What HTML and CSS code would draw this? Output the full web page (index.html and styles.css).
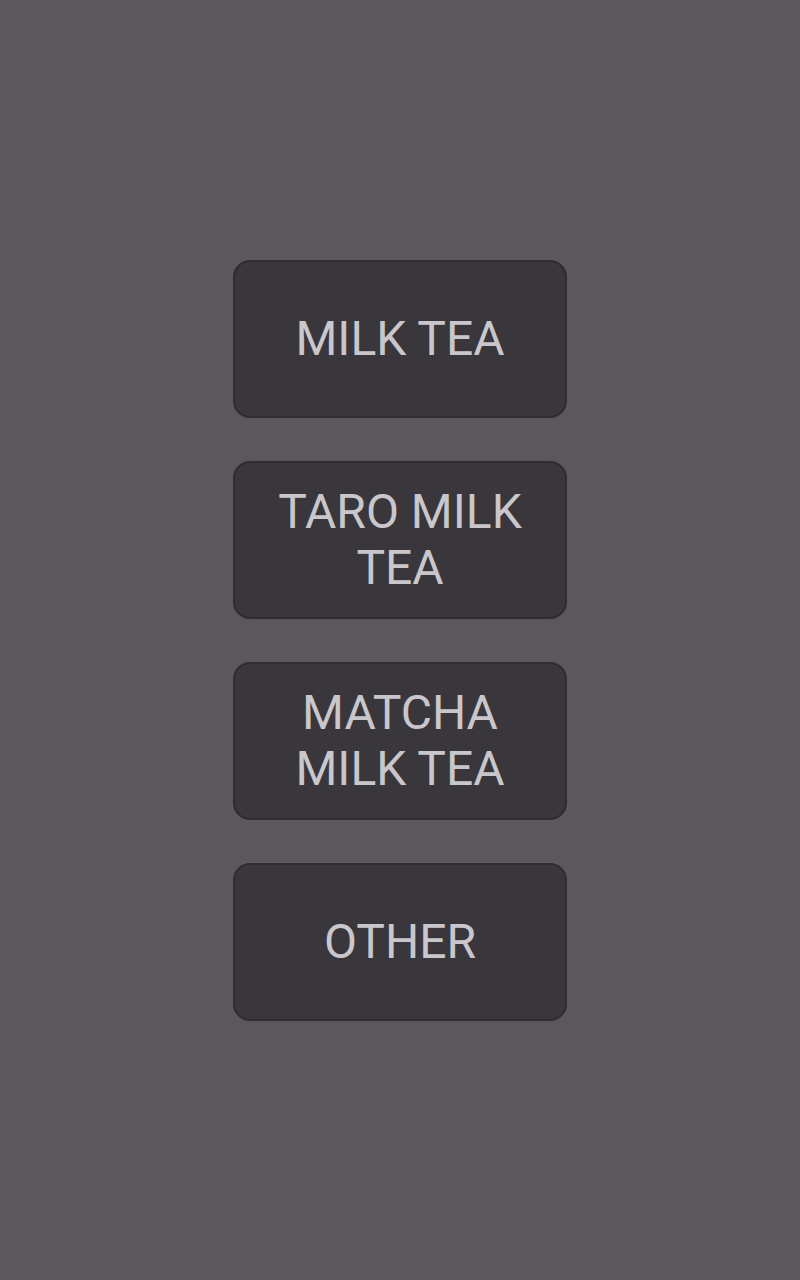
FILE: index.html
```html
<!DOCTYPE html>
<html>
<head>
<meta charset="utf-8">
<link rel="stylesheet" href="styles.css">
</head>
<body>
<main class="screen">
  <div class="menu">
    <button class="choice">MILK TEA</button>
    <button class="choice">TARO MILK TEA</button>
    <button class="choice">MATCHA MILK TEA</button>
    <button class="choice">OTHER</button>
  </div>
</main>
</body>
</html>
```
FILE: styles.css
```css
html, body {
  margin: 0;
  padding: 0;
  background: #5a585c;
}
.screen {
  width: 800px;
  height: 1280px;
  display: flex;
  align-items: center;
  justify-content: center;
}
.menu {
  display: flex;
  flex-direction: column;
  gap: 43px;
}
.choice {
  box-sizing: border-box;
  width: 334px;
  height: 158px;
  background: #39373b;
  border: 2px solid #2f2d31;
  border-radius: 17px;
  padding: 0 20px;
  color: #c9c7cb;
  font-family: Roboto, "Liberation Sans", sans-serif;
  font-size: 48px;
  line-height: 56px;
  text-align: center;
  display: flex;
  align-items: center;
  justify-content: center;
}
```
